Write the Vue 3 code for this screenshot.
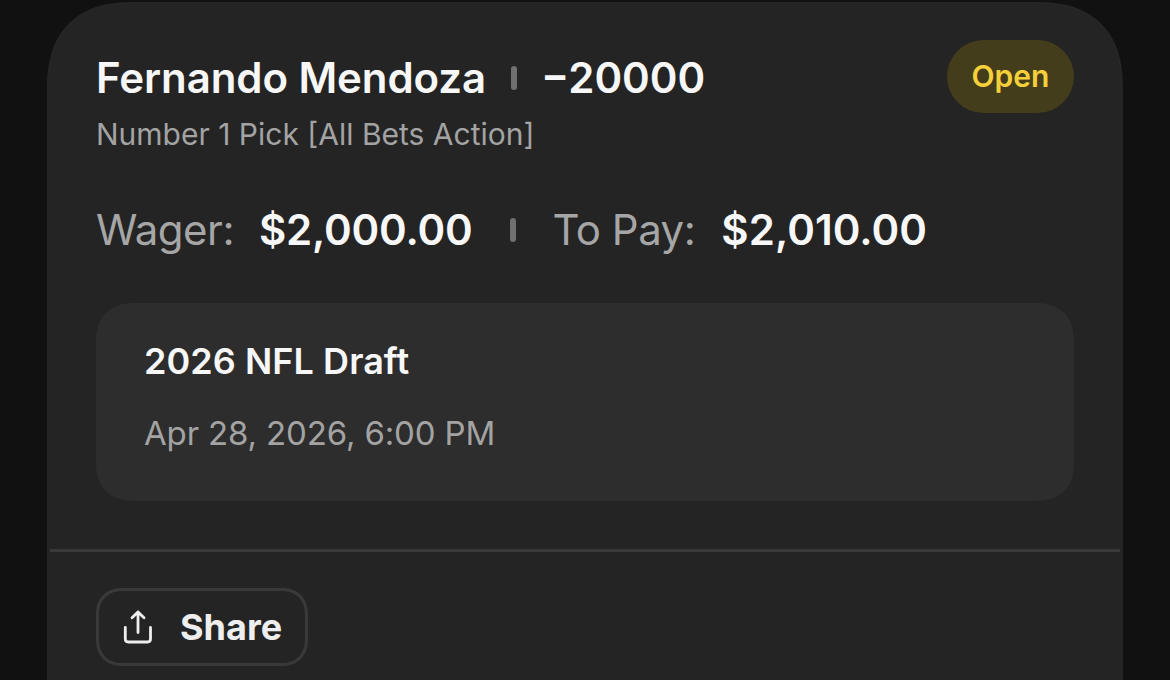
<script setup>
import { ref } from 'vue';

const bet = ref({
  selection: 'Fernando Mendoza',
  odds: '−20000',
  market: 'Number 1 Pick [All Bets Action]',
  status: 'Open',
  wager: '$2,000.00',
  toPay: '$2,010.00',
  event: '2026 NFL Draft',
  date: 'Apr 28, 2026, 6:00 PM'
});
</script>

<template>
  <div class="page">
    <div class="card">
      <div class="card-body">
        <div class="header">
          <div>
            <div class="title">
              <span class="selection">{{ bet.selection }}</span>
              <span class="separator"></span>
              <span class="odds">{{ bet.odds }}</span>
            </div>
            <div class="market">{{ bet.market }}</div>
          </div>
          <span class="status">{{ bet.status }}</span>
        </div>

        <div class="amounts">
          <span class="label">Wager:</span>
          <span class="value">{{ bet.wager }}</span>
          <span class="separator"></span>
          <span class="label">To Pay:</span>
          <span class="value pay-value">{{ bet.toPay }}</span>
        </div>

        <div class="event">
          <div class="event-name">{{ bet.event }}</div>
          <div class="event-date">{{ bet.date }}</div>
        </div>
      </div>

      <div class="footer">
        <button type="button" class="share">
          <svg width="32" height="36" viewBox="0 0 32 36" fill="none" stroke="#eeeeee" stroke-width="2.8" stroke-linecap="round" stroke-linejoin="round">
            <path d="M16 23.5V3M10 8.8L16 3L22 8.8M3.3 18.5V30Q3.3 33 6.3 33H25.5Q28.5 33 28.5 30V18.5" />
          </svg>
          <span class="share-text">Share</span>
        </button>
      </div>
    </div>
  </div>
</template>

<style>
body {
  background: #111111;
  overflow: hidden;
}
</style>

<style scoped>
.page {
  box-sizing: border-box;
  height: 680px;
  padding: 2px 47px 0;
  overflow: hidden;
  background: #111111;
  font-family: Inter, "Liberation Sans", sans-serif;
}

.card {
  box-sizing: border-box;
  height: 760px;
  border: 3px solid #252525;
  border-radius: 86px;
  corner-shape: superellipse(1.25);
  background: #242424;
}

.card-body {
  padding: 35px 46px 48px;
}

.header {
  display: flex;
  justify-content: space-between;
  height: 126px;
}

.title {
  display: flex;
  align-items: center;
  height: 76px;
  color: #f7f7f7;
  font-size: 42px;
  font-weight: 600;
  line-height: 50px;
  white-space: nowrap;
}

.selection {
  letter-spacing: -0.08px;
}

.separator {
  width: 6px;
  height: 24px;
  margin: 0 24px 0 25px;
  border-radius: 3px;
  background: #707070;
}

.market {
  height: 36px;
  color: #a3a3a3;
  font-size: 30px;
  line-height: 36px;
  white-space: nowrap;
}

.status {
  width: 127px;
  height: 73px;
  border-radius: 37px;
  background: #443d1c;
  color: #f5d03b;
  font-size: 30px;
  font-weight: 600;
  line-height: 73px;
  text-align: center;
}

.amounts {
  display: flex;
  align-items: center;
  height: 52px;
  margin-top: 38px;
  font-size: 42px;
  white-space: nowrap;
}

.label,
.value {
  margin-top: -2px;
}

.label {
  color: #a6a6a6;
  letter-spacing: -0.5px;
}

.value {
  margin-left: 25px;
  color: #f7f7f7;
  font-weight: 600;
  letter-spacing: -0.2px;
}

.pay-value {
  margin-left: 26px;
  letter-spacing: 0.05px;
}

.amounts .separator {
  margin: 0 37px;
}

.event {
  box-sizing: border-box;
  height: 198px;
  margin-top: 47px;
  padding: 36px 48px;
  border-radius: 38px;
  corner-shape: superellipse(1.2);
  background: #2d2d2d;
}

.event-name {
  height: 72px;
  color: #f7f7f7;
  font-size: 36px;
  font-weight: 600;
  letter-spacing: 0.05px;
  line-height: 44px;
}

.event-date {
  color: #a3a3a3;
  font-size: 33px;
  letter-spacing: -0.15px;
  line-height: 44px;
}

.footer {
  padding: 36px 46px;
  border-top: 3px solid #393939;
}

.share {
  box-sizing: border-box;
  display: flex;
  align-items: center;
  width: 212px;
  height: 78px;
  padding: 0 0 0 23px;
  border: 3px solid #393939;
  border-radius: 27px;
  corner-shape: superellipse(1.2);
  background: transparent;
  color: #eeeeee;
  font-family: inherit;
  font-size: 36px;
  font-weight: 700;
}

.share-text {
  margin-left: 26px;
}
</style>
